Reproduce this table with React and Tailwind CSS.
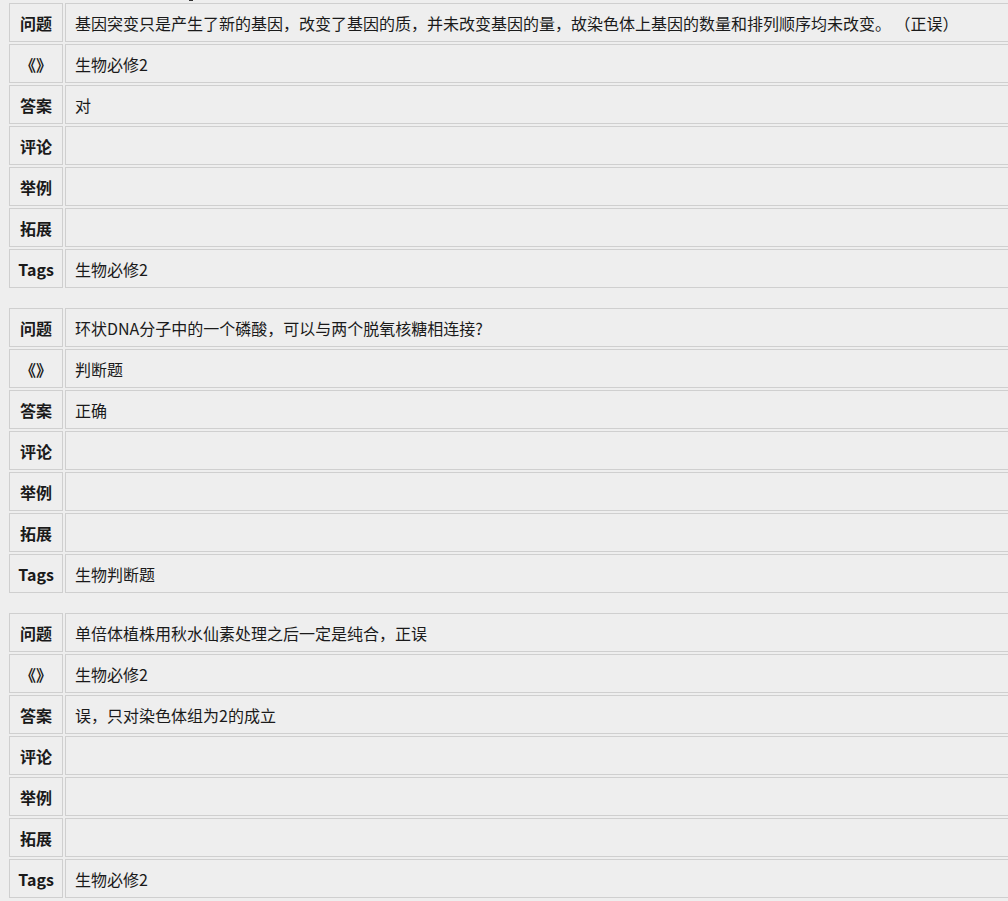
import React from "react";

const data = [
  [
    ["问题", "基因突变只是产生了新的基因，改变了基因的质，并未改变基因的量，故染色体上基因的数量和排列顺序均未改变。 （正误）"],
    ["《》", "生物必修2"],
    ["答案", "对"],
    ["评论", ""],
    ["举例", ""],
    ["拓展", ""],
    ["Tags", "生物必修2"],
  ],
  [
    ["问题", "环状DNA分子中的一个磷酸，可以与两个脱氧核糖相连接?"],
    ["《》", "判断题"],
    ["答案", "正确"],
    ["评论", ""],
    ["举例", ""],
    ["拓展", ""],
    ["Tags", "生物判断题"],
  ],
  [
    ["问题", "单倍体植株用秋水仙素处理之后一定是纯合，正误"],
    ["《》", "生物必修2"],
    ["答案", "误，只对染色体组为2的成立"],
    ["评论", ""],
    ["举例", ""],
    ["拓展", ""],
    ["Tags", "生物必修2"],
  ],
];

export default function App() {
  return (
    <div
      className="w-[1008px] h-[901px] overflow-hidden bg-[#eeeeee] text-[#1a1a1a] text-[16px]"
      style={{ fontFamily: '"Microsoft YaHei", "Noto Sans CJK SC", "Noto Sans", sans-serif' }}
    >
      <div className="h-[1px] flex">
        <div className="ml-[189px] w-[4px] h-[1px] bg-[#333]" />
      </div>
      {data.map((rows, ti) => (
        <table
          key={ti}
          className="ml-[7px] mb-[16px] w-[1040px] table-fixed border-separate border-spacing-[2px]"
        >
          <colgroup>
            <col className="w-[54px]" />
            <col />
          </colgroup>
          <tbody>
            {rows.map(([k, v], ri) => (
              <tr key={ri}>
                <th className="h-[39px] p-0 border border-[#cfcfcf] text-center font-bold leading-[20px] align-middle">
                  {k}
                </th>
                <td className="h-[39px] py-0 pl-[9px] pr-0 border border-[#cfcfcf] text-left leading-[20px] align-middle whitespace-nowrap">
                  {v}
                </td>
              </tr>
            ))}
          </tbody>
        </table>
      ))}
    </div>
  );
}
